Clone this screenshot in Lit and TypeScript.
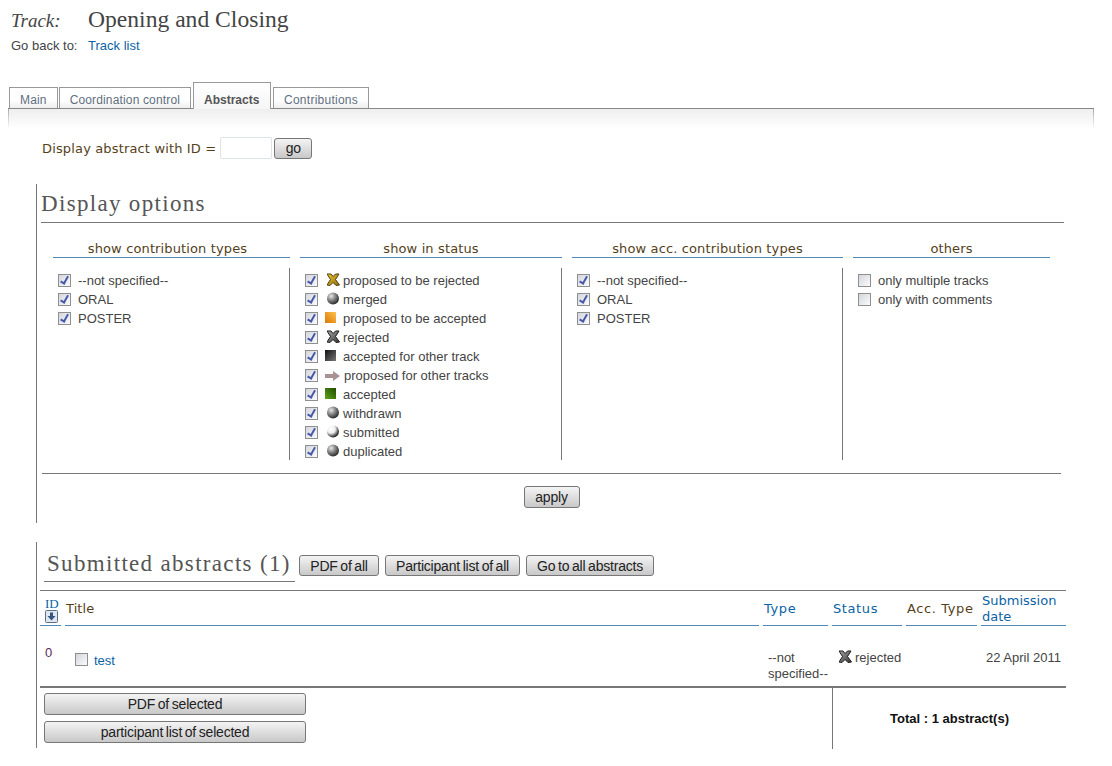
import { LitElement, html, css, svg } from 'lit';
import { customElement } from 'lit/decorators.js';

const defs = svg`
  <defs>
    <radialGradient id="ball" cx="35%" cy="30%" r="75%">
      <stop offset="0" stop-color="#e8e8e8"/><stop offset="0.5" stop-color="#808080"/><stop offset="1" stop-color="#222"/>
    </radialGradient>
    <radialGradient id="ballw" cx="35%" cy="30%" r="75%">
      <stop offset="0" stop-color="#fff"/><stop offset="0.45" stop-color="#eee"/><stop offset="0.8" stop-color="#555"/><stop offset="1" stop-color="#111"/>
    </radialGradient>
    <linearGradient id="orange" x1="0" y1="1" x2="1" y2="0">
      <stop offset="0" stop-color="#d97a00"/><stop offset="1" stop-color="#ffc050"/>
    </linearGradient>
    <linearGradient id="dark" x1="1" y1="1" x2="0" y2="0">
      <stop offset="0" stop-color="#777"/><stop offset="1" stop-color="#111"/>
    </linearGradient>
    <linearGradient id="green" x1="1" y1="0" x2="0" y2="1">
      <stop offset="0" stop-color="#1f4a00"/><stop offset="1" stop-color="#5fa51a"/>
    </linearGradient>
    <linearGradient id="xg" x1="0" y1="0" x2="1" y2="1">
      <stop offset="0" stop-color="#f2c830"/><stop offset="1" stop-color="#8a6a10"/>
    </linearGradient>
    <linearGradient id="xd" x1="0" y1="0" x2="1" y2="1">
      <stop offset="0" stop-color="#aaa"/><stop offset="1" stop-color="#333"/>
    </linearGradient>
  </defs>`;

const crossPath = 'M1 1 L5 1 L7 3.5 L9.5 1 L13 1 L9.5 6.5 L13.5 12 L10 12.5 L7 9.5 L4 12.5 L1 12 L4.5 6.5 Z';

const icon = (kind: string) => {
  switch (kind) {
    case 'xgold':
      return html`<svg class="ic" width="14" height="14" viewBox="1 0 14 14"><path d=${crossPath} fill="url(#xg)" stroke="#4c3e10" stroke-width="1"/></svg>`;
    case 'xdark':
      return html`<svg class="ic" width="14" height="14" viewBox="1 0 14 14"><path d=${crossPath} fill="url(#xd)" stroke="#1c1c1c" stroke-width="1"/></svg>`;
    case 'ball':
      return html`<svg class="ic" width="14" height="14" viewBox="0 0 14 14"><circle cx="6" cy="6.5" r="6" fill="url(#ball)"/></svg>`;
    case 'ballw':
      return html`<svg class="ic" width="14" height="14" viewBox="0 0 14 14"><circle cx="6" cy="6.5" r="6" fill="url(#ballw)"/></svg>`;
    case 'orange':
      return html`<svg class="ic sq" width="12" height="12" viewBox="0 0 12 12"><rect width="11" height="11" fill="url(#orange)"/></svg>`;
    case 'dark':
      return html`<svg class="ic sq" width="12" height="12" viewBox="0 0 12 12"><rect width="11" height="11" fill="url(#dark)"/></svg>`;
    case 'green':
      return html`<svg class="ic sq" width="12" height="12" viewBox="0 0 12 12"><rect width="11" height="11" fill="url(#green)"/></svg>`;
    default:
      return html`<svg class="ic arrow" width="16" height="12" viewBox="0 0 16 12"><path d="M0 4 H8 V1 L15 6 L8 11 V8 H0 Z" fill="#a89292"/></svg>`;
  }
};

const types = ['--not specified--', 'ORAL', 'POSTER'];
const statuses = [
  ['xgold', 'proposed to be rejected'],
  ['ball', 'merged'],
  ['orange', 'proposed to be accepted'],
  ['xdark', 'rejected'],
  ['dark', 'accepted for other track'],
  ['arrow', 'proposed for other tracks'],
  ['green', 'accepted'],
  ['ball', 'withdrawn'],
  ['ballw', 'submitted'],
  ['ball', 'duplicated'],
];

@customElement('app-root')
export class AppRoot extends LitElement {
  static styles = css`
    :host {
      display: block;
      width: 1112px;
      height: 766px;
      overflow: hidden;
      background: #fff;
      font-family: 'Liberation Sans', Arial, sans-serif;
      font-size: 13px;
      color: #444;
    }
    a { color: #0b63a5; text-decoration: none; }
    .defs { position: absolute; width: 0; height: 0; }

    .top { padding: 6px 0 0 11px; }
    .track { display: flex; align-items: baseline; font-family: 'Liberation Serif', serif; height: 29px; }
    .track i { width: 77px; font-size: 19px; color: #444; }
    .track span { font-size: 23.6px; color: #444; }
    .back { display: flex; height: 17px; line-height: 17px; margin-top: 2px; }
    .back span { width: 77px; }

    .tabs { display: flex; align-items: flex-end; gap: 2px; margin: 27px 0 0 9px; height: 27px; font-size: 12px; }
    .tab {
      height: 20px;
      line-height: 24px;
      padding: 0 10px;
      border: 1px solid #999;
      border-bottom: 0;
      color: #5f6f80;
      letter-spacing: 0.15px;
      background: linear-gradient(#fff 60%, #eee);
    }
    .tab:first-child { margin-right: -1px; }
    .tab:last-child { letter-spacing: 0.25px; }
    .tab.active {
      width: 56px;
      height: 26px;
      line-height: 34px;
      font-weight: bold;
      color: #555;
      letter-spacing: 0;
      white-space: nowrap;
      background: linear-gradient(#fff, #f6f6f6);
      margin-bottom: -1px;
      position: relative;
    }
    .panel {
      margin-left: 8px;
      width: 1086px;
      height: 20px;
      border-top: 1px solid #888;
      background:
        linear-gradient(#aaa, #fff) left / 1px 100% no-repeat,
        linear-gradient(#aaa, #fff) right / 1px 100% no-repeat,
        linear-gradient(#eee, #fff);
    }

    .verd { font-family: 'DejaVu Sans', Verdana, sans-serif; font-size: 13px; color: #553f1a; }
    .find { display: flex; align-items: center; gap: 2px; margin: 7px 0 0 42px; height: 24px; }
    .find .verd { margin-right: 2px; letter-spacing: 0.15px; }
    .find input {
      width: 52px; height: 22px; box-sizing: border-box;
      border: 1px solid #dfe3e8; border-radius: 2px; background: #fff; margin: 0;
    }
    .btn {
      box-sizing: border-box;
      margin: 0;
      padding: 0;
      height: 22px;
      border: 1px solid #777;
      border-radius: 3px;
      background: linear-gradient(#f4f4f4, #c8c8c8);
      font-family: 'Liberation Sans', Arial, sans-serif;
      font-size: 14px;
      letter-spacing: -0.2px;
      word-spacing: -1px;
      color: #222;
    }
    .find .btn { width: 38px; height: 21px; }

    .section { border-left: 1px solid #777; margin-left: 36px; }
    .options { margin-top: 24px; height: 339px; }
    h2 {
      margin: 0;
      font-family: 'Liberation Serif', serif;
      font-weight: normal;
      font-size: 23px;
      letter-spacing: 1.32px;
      color: #555;
    }
    .options h2 { margin-left: 4px; height: 38px; line-height: 40px; border-bottom: 1px solid #777; width: 1023px; box-sizing: content-box; }

    .cols { display: flex; margin: 17px 0 0 16px; gap: 10px; }
    .col-head {
      text-align: center;
      height: 17px;
      line-height: 18px;
      letter-spacing: 0.13px;
      border-bottom: 1px solid #4f88b8;
    }
    .col-a { width: 237px; }
    .col-a .col-head { padding-right: 8px; width: 229px; }
    .col-b { width: 262px; }
    .col-c { width: 271px; }
    .col-d { width: 197px; }
    .col-body { height: 192px; margin-top: 10px; border-right: 1px solid #777; padding: 3px 0 0 5px; box-sizing: border-box; }
    .col-d .col-body { border-right: 0; }
    .row { display: flex; align-items: center; height: 19px; white-space: nowrap; }
    .cb {
      appearance: none;
      width: 13px; height: 13px;
      margin: 0 7px 0 0;
      flex: none;
      border: 1px solid #8e8f8f;
      box-sizing: border-box;
      background: linear-gradient(135deg, #d4d6dc, #fbfbfd);
    }
    .cb.on::after {
      content: '';
      display: block;
      width: 3px;
      height: 7px;
      margin: 0 0 0 3px;
      border: solid #4558a8;
      border-width: 0 2px 2px 0;
      transform: rotate(30deg);
    }
    .ic { flex: none; margin: -2px 2px 0 2px; }
    .ic.sq { margin: -2px 6px 0 0; }
    .ic.arrow { margin: 0 3px 0 0; }
    .apply-wrap { margin: 13px 0 0 5px; width: 1019px; border-top: 1px solid #777; padding-top: 12px; text-align: center; }
    .apply-wrap .btn { width: 56px; }

    .submitted { margin-top: 19px; height: 206px; }
    .sub-head { display: flex; align-items: flex-start; height: 48px; }
    .sub-head h2 { margin-left: 7px; width: 251px; height: 40px; line-height: 44px; padding-left: 3px; border-bottom: 1px solid #777; box-sizing: border-box; white-space: nowrap; }
    .sub-actions { display: flex; gap: 6px; margin: 13px 0 0 4px; }
    .sub-actions .btn { padding: 0 10px; height: 21px; }
    .sub-actions .btn:first-child { width: 80px; }

    .grid {
      margin-left: 3px;
      width: 1026px;
      border-top: 1px solid #777;
      display: grid;
      grid-template-columns: 21px 694px 65px 70px 71px 85px;
      column-gap: 4px;
    }
    .th {
      height: 32px;
      padding: 2px 0 0 1px;
      border-bottom: 1px solid #4f88b8;
      display: flex;
      align-items: center;
      line-height: 16px;
    }
    .th.sp { letter-spacing: 0.6px; }
    .th.plain { letter-spacing: 0.1px; }
    .th a { color: #0b63a5; }
    .th.id { display: block; padding: 6px 0 0 5px; height: 28px; font-family: 'Liberation Serif', serif; font-size: 13px; line-height: 13px; color: #0b63a5; }
    .sortbox { display: block; width: 13px; height: 13px; }
    .td { height: 60px; padding-top: 24px; box-sizing: border-box; line-height: 16px; }
    .td.num { padding: 19px 0 0 5px; color: #5c2a55; }
    .td.title { display: flex; align-items: flex-start; padding: 27px 0 0 10px; }
    .td.title .cb { margin: 0 6px 0 0; }
    .td.type { padding: 24px 0 0 5px; }
    .td.status { display: flex; align-items: flex-start; padding-left: 5px; }
    .td.status .ic { margin: 0 2px 0 2px; }
    .td.date { padding-left: 5px; white-space: nowrap; }

    .foot {
      margin-left: 3px;
      width: 1026px;
      border-top: 2px solid #777;
      display: flex;
      height: 61px;
    }
    .foot-left { width: 793px; box-sizing: border-box; padding: 5px 0 0 4px; display: flex; flex-direction: column; gap: 6px; border-right: 1px solid #777; }
    .foot-left .btn { width: 262px; flex: none; }
    .total { flex: 1; text-align: center; padding-top: 23px; font-weight: bold; color: #111; }
  `;

  private opt(label: unknown, on = true) {
    return html`<div class="row"><input type="checkbox" class="cb ${on ? 'on' : ''}" ?checked=${on} />${label}</div>`;
  }

  render() {
    return html`
      <svg class="defs">${defs}</svg>
      <div class="top">
        <div class="track"><i>Track:</i><span>Opening and Closing</span></div>
        <div class="back"><span>Go back to:</span><a href="#">Track list</a></div>
      </div>

      <div class="tabs">
        <div class="tab">Main</div>
        <div class="tab">Coordination control</div>
        <div class="tab active">Abstracts</div>
        <div class="tab">Contributions</div>
      </div>
      <div class="panel"></div>

      <div class="find">
        <span class="verd">Display abstract with ID =</span>
        <input type="text" />
        <button class="btn">go</button>
      </div>

      <div class="section options">
        <h2>Display options</h2>
        <div class="cols">
          <div class="col-a">
            <div class="col-head verd">show contribution types</div>
            <div class="col-body">${types.map(t => this.opt(t))}</div>
          </div>
          <div class="col-b">
            <div class="col-head verd">show in status</div>
            <div class="col-body">
              ${statuses.map(([k, t]) => this.opt(html`${icon(k)}${t}`))}
            </div>
          </div>
          <div class="col-c">
            <div class="col-head verd">show acc. contribution types</div>
            <div class="col-body">${types.map(t => this.opt(t))}</div>
          </div>
          <div class="col-d">
            <div class="col-head verd">others</div>
            <div class="col-body">
              ${this.opt('only multiple tracks', false)}
              ${this.opt('only with comments', false)}
            </div>
          </div>
        </div>
        <div class="apply-wrap"><button class="btn">apply</button></div>
      </div>

      <div class="section submitted">
        <div class="sub-head">
          <h2>Submitted abstracts (1)</h2>
          <div class="sub-actions">
            <button class="btn">PDF of all</button>
            <button class="btn">Participant list of all</button>
            <button class="btn">Go to all abstracts</button>
          </div>
        </div>
        <div class="grid">
          <div class="th id">ID
            <svg class="sortbox" viewBox="0 0 13 13">
              <rect x="0.5" y="0.5" width="12" height="12" rx="1" fill="#dfe6ee" stroke="#5a6f88"/>
              <path d="M5 2.5 H8 V6 H10.5 L6.5 10.5 L2.5 6 H5 Z" fill="#33557f"/>
            </svg>
          </div>
          <div class="th verd plain">Title</div>
          <div class="th verd sp"><a href="#">Type</a></div>
          <div class="th verd sp"><a href="#">Status</a></div>
          <div class="th verd sp">Acc. Type</div>
          <div class="th verd"><a href="#">Submission date</a></div>

          <div class="td num">0</div>
          <div class="td title"><input type="checkbox" class="cb" /><a href="#">test</a></div>
          <div class="td type">--not specified--</div>
          <div class="td status">${icon('xdark')}rejected</div>
          <div class="td"></div>
          <div class="td date">22 April 2011</div>
        </div>
        <div class="foot">
          <div class="foot-left">
            <button class="btn">PDF of selected</button>
            <button class="btn">participant list of selected</button>
          </div>
          <div class="total">Total : 1 abstract(s)</div>
        </div>
      </div>
    `;
  }
}
